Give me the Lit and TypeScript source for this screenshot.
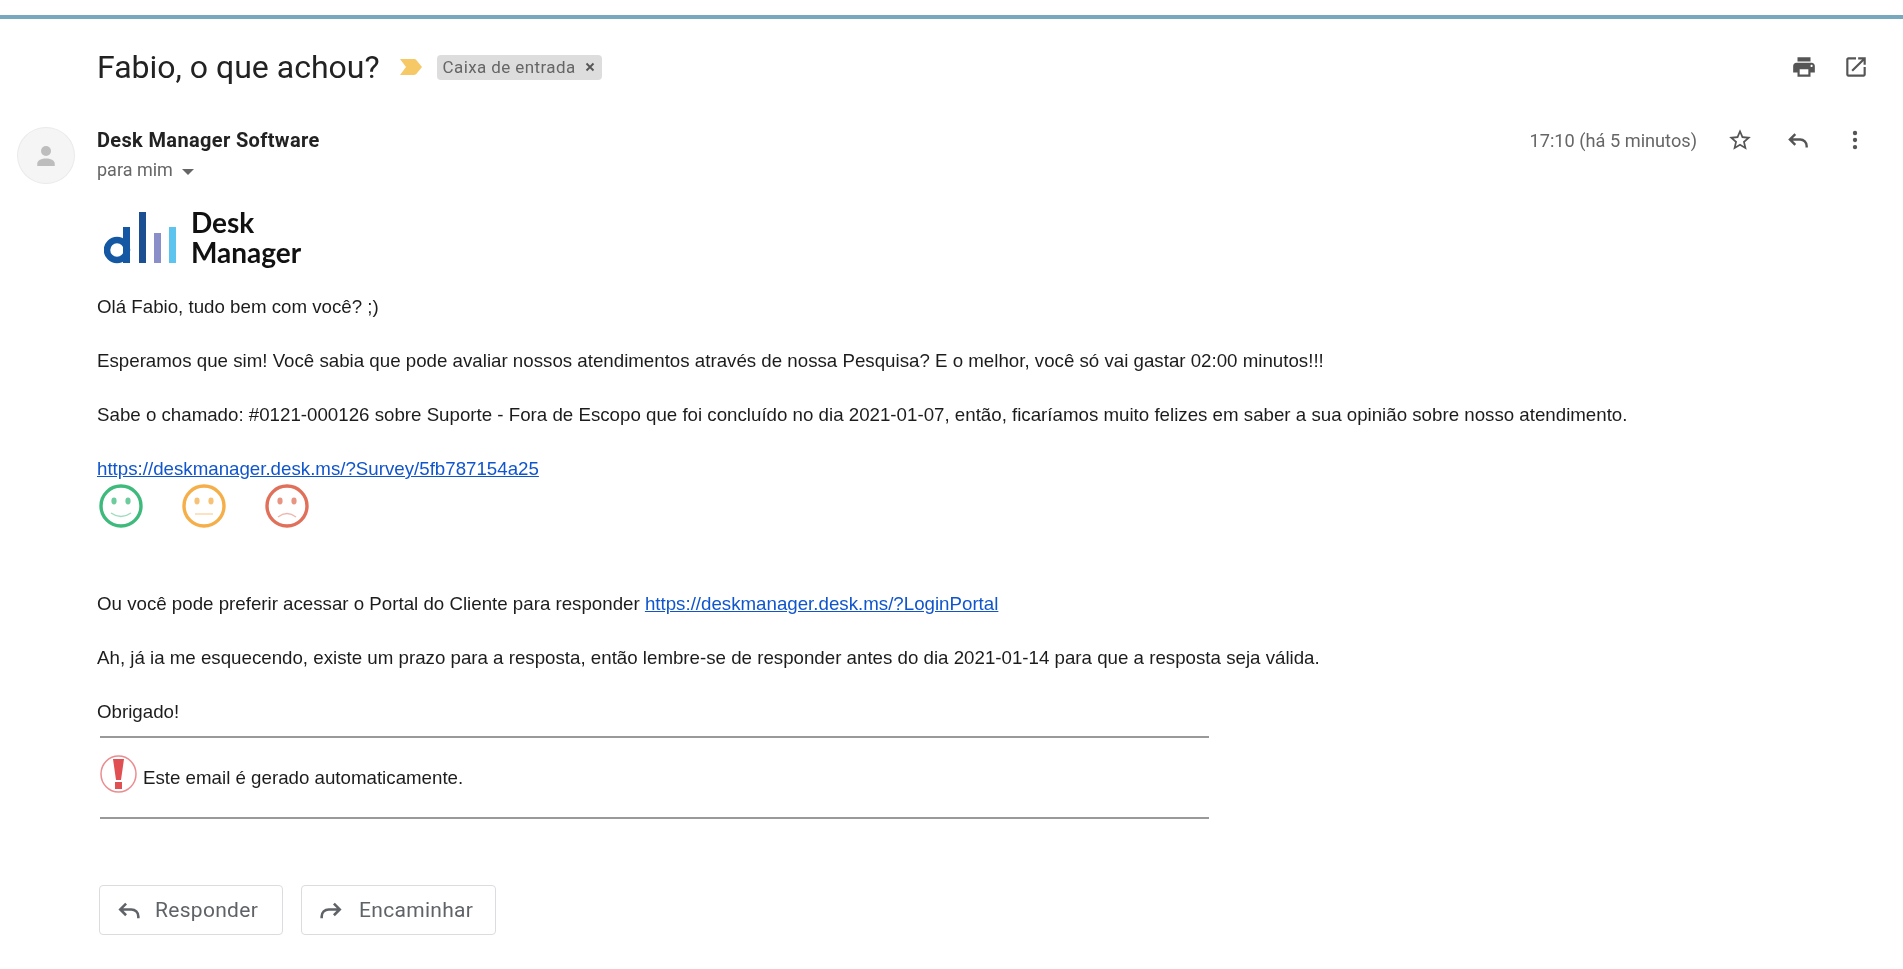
import {LitElement, html, css, svg} from "lit";
import {customElement} from "lit/decorators.js";

const REPLY = svg`<path d="M9.5 6.5 4.5 11.5l5 5M4.5 11.5H14a6 6 0 0 1 6 6V19" fill="none" stroke="currentColor" stroke-width="2.2"/>`;
const FORWARD = svg`<path d="M14.5 6.5l5 5-5 5M19.5 11.5H10a6 6 0 0 0-6 6V19" fill="none" stroke="currentColor" stroke-width="2.2"/>`;

const face = (color: string, mouth: string) => html`
  <svg class="face" viewBox="0 0 44 44">
    <circle cx="22" cy="22" r="20" fill="none" stroke=${color} stroke-width="3.4"/>
    <ellipse cx="15" cy="17" rx="2.6" ry="3.4" fill=${color} opacity=".75"/>
    <ellipse cx="29" cy="17" rx="2.6" ry="3.4" fill=${color} opacity=".75"/>
    <path d=${mouth} fill="none" stroke=${color} stroke-width="1.4" opacity=".5"/>
  </svg>`;

@customElement("app-root")
export class AppRoot extends LitElement {
  static styles = css`
    :host {
      display: block;
      height: 969px;
      background: #fff;
      overflow: hidden;
      font-family: Roboto, "Liberation Sans", sans-serif;
      filter: blur(0.5px);
    }
    .bar {
      height: 4px;
      margin-top: 15px;
      background: #76a9bd;
    }
    .subject {
      display: flex;
      align-items: center;
      height: 48px;
      margin-top: 24px;
      padding: 0 34px 0 97px;
    }
    h1 {
      margin: 0;
      font-size: 32px;
      font-weight: 400;
      color: #222;
    }
    .label {
      margin-left: 19px;
      width: 24px;
      height: 18px;
    }
    .chip {
      display: flex;
      align-items: center;
      gap: 9px;
      height: 25px;
      margin-left: 14px;
      padding: 0 7px 0 6px;
      border-radius: 4px;
      background: #dddddd;
      color: #666;
      font-size: 17px;
      letter-spacing: .4px;
    }
    .chip svg {
      width: 10px;
      height: 10px;
    }
    .tools {
      display: flex;
      gap: 26px;
      margin-left: auto;
      color: #555;
    }
    .tools svg {
      width: 26px;
      height: 26px;
      fill: currentColor;
    }
    .message {
      display: flex;
      gap: 22px;
      padding: 35px 35px 0 17px;
    }
    .avatar {
      flex: none;
      display: flex;
      align-items: center;
      justify-content: center;
      width: 58px;
      height: 57px;
      margin-top: 1px;
      border: 1px solid #eaeaea;
      border-radius: 50%;
      background: #f5f5f5;
      box-sizing: border-box;
    }
    .avatar svg {
      width: 30px;
      height: 30px;
      fill: #bdbdbd;
    }
    .main {
      flex: 1;
      min-width: 0;
    }
    .head {
      display: flex;
      justify-content: space-between;
    }
    .name {
      margin-top: 2px;
      font-size: 20px;
      letter-spacing: .35px;
      font-weight: 700;
      line-height: 24px;
      color: #222;
    }
    .to {
      display: flex;
      align-items: center;
      gap: 9px;
      margin-top: 8px;
      font-size: 18px;
      line-height: 20px;
      color: #666;
    }
    .caret {
      width: 0;
      height: 0;
      margin-top: 3px;
      border: 6px solid transparent;
      border-top-color: #666;
      border-bottom-width: 0;
    }
    .meta {
      display: flex;
      align-items: center;
      height: 28px;
      color: #666;
      font-size: 18.2px;
    }
    .meta svg {
      width: 26px;
      height: 26px;
      margin-left: 32px;
      fill: #555;
      color: #555;
    }
    .meta svg:first-of-type {
      margin-left: 30px;
    }
    .meta svg:last-of-type {
      margin-left: 31px;
    }
    .logo {
      display: flex;
      align-items: center;
      gap: 11px;
      margin: 26px 0 0 7px;
      height: 62px;
    }
    .logo svg {
      width: 76px;
      height: 56px;
    }
    .logo div {
      font-family: Lato, sans-serif;
      font-weight: 700;
      font-size: 28px;
      line-height: 30px;
      color: #111;
    }
    .body {
      margin-top: 25px;
      font-family: "Liberation Sans", Arial, sans-serif;
      font-size: 18.72px;
      line-height: 27px;
      color: #1c1c1c;
    }
    p {
      margin: 0 0 27px;
    }
    a {
      color: #1155cc;
    }
    .link {
      margin: 0;
    }
    .thanks {
      margin: 0 0 11px;
    }
    .faces {
      display: flex;
      gap: 39px;
      margin: 2px 0 0 2px;
      height: 106px;
    }
    .face {
      width: 44px;
      height: 44px;
    }
    hr {
      width: 1109px;
      height: 2px;
      margin: 0 0 0 3px;
      border: none;
      background: #999;
    }
    .notice {
      display: flex;
      align-items: center;
      gap: 6px;
      height: 79px;
      margin-left: 3px;
    }
    .notice svg {
      width: 37px;
      height: 38px;
      margin-top: -8px;
    }
    .actions {
      display: flex;
      gap: 18px;
      margin: 66px 0 0 2px;
    }
    .btn {
      display: flex;
      align-items: center;
      gap: 12px;
      height: 50px;
      padding: 0 24px 0 15px;
      border: 1px solid #dadce0;
      border-radius: 4px;
      box-sizing: border-box;
      color: #5f6368;
      font-size: 21px;
      letter-spacing: .3px;
    }
    .btn + .btn {
      gap: 14px;
      padding-right: 22px;
    }
    .btn svg {
      width: 28px;
      height: 28px;
    }
  `;

  render() {
    return html`
      <div class="bar"></div>
      <div class="subject">
        <h1>Fabio, o que achou?</h1>
        <svg class="label" viewBox="0 0 24 18"><path d="M1 1h14c1 0 2 .5 2.500 1.200L23 9l-5.500 6.800c-.5.7-1.500 1.200-2.500 1.200H1l6-8z" fill="#f6c866"/></svg>
        <span class="chip">Caixa de entrada
          <svg viewBox="0 0 10 10"><path d="M1.500 1.500l7 7m0-7l-7 7" stroke="#555" stroke-width="1.800"/></svg>
        </span>
        <div class="tools">
          <svg viewBox="0 0 24 24"><path d="M19 8H5c-1.660 0-3 1.340-3 3v6h4v4h12v-4h4v-6c0-1.660-1.340-3-3-3zm-3 11H8v-5h8v5zm3-7c-.55 0-1-.45-1-1s.45-1 1-1 1 .45 1 1-.45 1-1 1zm-1-9H6v4h12V3z"/></svg>
          <svg viewBox="0 0 24 24"><path d="M19 19H5V5h7V3H5c-1.110 0-2 .9-2 2v14c0 1.100.89 2 2 2h14c1.100 0 2-.9 2-2v-7h-2v7zM14 3v2h3.590l-9.830 9.830 1.410 1.410L19 6.410V10h2V3h-7z"/></svg>
        </div>
      </div>
      <div class="message">
        <div class="avatar">
          <svg viewBox="0 0 24 24"><circle cx="12" cy="8" r="4"/><path d="M12 14c-3.500 0-7 1.500-7 4v2h14v-2c0-2.500-3.500-4-7-4z"/></svg>
        </div>
        <div class="main">
          <div class="head">
            <div>
              <div class="name">Desk Manager Software</div>
              <div class="to">para mim <span class="caret"></span></div>
            </div>
            <div class="meta">
              17:10 (há 5 minutos)
              <svg viewBox="0 0 24 24"><path d="M22 9.240l-7.190-.62L12 2 9.190 8.630 2 9.240l5.460 4.730L5.820 21 12 17.270 18.180 21l-1.630-7.030L22 9.240zM12 15.400l-3.760 2.270 1-4.280-3.320-2.880 4.380-.38L12 6.100l1.710 4.040 4.380.38-3.320 2.880 1 4.280L12 15.400z"/></svg>
              <svg viewBox="0 0 24 24" style="fill:none">${REPLY}</svg>
              <svg viewBox="0 0 24 24"><circle cx="12" cy="5.500" r="2"/><circle cx="12" cy="12" r="2"/><circle cx="12" cy="18.500" r="2"/></svg>
            </div>
          </div>
          <div class="logo">
            <svg viewBox="0 0 76 56">
              <circle cx="13" cy="41" r="10" fill="none" stroke="#1458a4" stroke-width="6.500"/>
              <rect x="19" y="18" width="7" height="36" fill="#1458a4"/>
              <rect x="35" y="3" width="7" height="51" fill="#1b4f91"/>
              <rect x="50" y="24" width="7" height="30" fill="#8a8fc9"/>
              <rect x="65" y="18" width="7" height="36" fill="#5cc4ee"/>
            </svg>
            <div>Desk<br>Manager</div>
          </div>
          <div class="body">
            <p>Olá Fabio, tudo bem com você? ;)</p>
            <p>Esperamos que sim! Você sabia que pode avaliar nossos atendimentos através de nossa Pesquisa? E o melhor, você só vai gastar 02:00 minutos!!!</p>
            <p>Sabe o chamado: #0121-000126 sobre Suporte - Fora de Escopo que foi concluído no dia 2021-01-07, então, ficaríamos muito felizes em saber a sua opinião sobre nosso atendimento.</p>
            <p class="link"><a href="#">https://deskmanager.desk.ms/?Survey/5fb787154a25</a></p>
            <div class="faces">
              ${face("#3dba7c", "M12 29q10 7 20 0")}
              ${face("#f5ae48", "M13 30h18")}
              ${face("#e0705a", "M13 33q9-7 18 0")}
            </div>
            <p>Ou você pode preferir acessar o Portal do Cliente para responder <a href="#">https://deskmanager.desk.ms/?LoginPortal</a></p>
            <p>Ah, já ia me esquecendo, existe um prazo para a resposta, então lembre-se de responder antes do dia 2021-01-14 para que a resposta seja válida.</p>
            <p class="thanks">Obrigado!</p>
            <hr>
            <div class="notice">
              <svg viewBox="0 0 37 38">
                <ellipse cx="18.500" cy="19" rx="17.500" ry="18" fill="#fff" stroke="#eb8d90" stroke-width="1.500"/>
                <path d="M13 4h11l-3 21h-5z" fill="#e04f52"/>
                <rect x="15" y="27" width="7" height="7" fill="#e04f52"/>
              </svg>
              Este email é gerado automaticamente.
            </div>
            <hr>
          </div>
          <div class="actions">
            <div class="btn"><svg viewBox="0 0 24 24">${REPLY}</svg>Responder</div>
            <div class="btn"><svg viewBox="0 0 24 24">${FORWARD}</svg>Encaminhar</div>
          </div>
        </div>
      </div>
    `;
  }
}
